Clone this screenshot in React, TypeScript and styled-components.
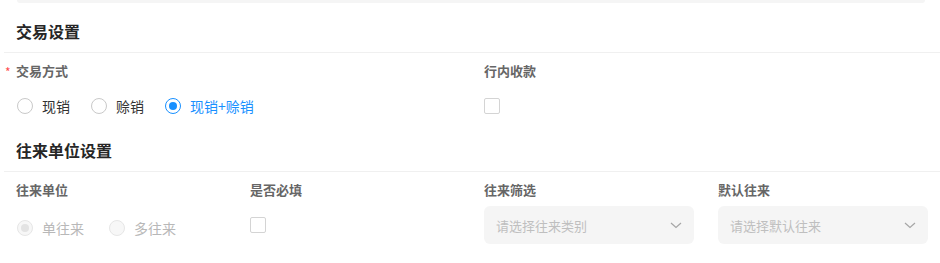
import React from 'react';
import styled, { createGlobalStyle } from 'styled-components';

const GlobalStyle = createGlobalStyle`
  body {
    margin: 0;
    background: #ffffff;
    font-family: "Noto Sans CJK SC", "Noto Sans", sans-serif;
    color: #333333;
  }
`;

function App() {
  return (
    <>
      <GlobalStyle />
      <Page>
        <TopStrip />
        <SectionHeader>
          <Title>交易设置</Title>
        </SectionHeader>
        <TwoCols>
          <Field>
            <Label required>交易方式</Label>
            <Control>
              <RadioGroup>
                <RadioItem gap={21}>
                  <Radio />
                  <RadioText>现销</RadioText>
                </RadioItem>
                <RadioItem gap={21}>
                  <Radio />
                  <RadioText>赊销</RadioText>
                </RadioItem>
                <RadioItem>
                  <Radio checked />
                  <RadioText checked>现销+赊销</RadioText>
                </RadioItem>
              </RadioGroup>
            </Control>
          </Field>
          <Field>
            <Label>行内收款</Label>
            <Control>
              <Checkbox />
            </Control>
          </Field>
        </TwoCols>

        <SectionHeader>
          <Title>往来单位设置</Title>
        </SectionHeader>
        <FourCols>
          <Field>
            <Label>往来单位</Label>
            <Control tall>
              <RadioGroup offset={3}>
                <RadioItem gap={25}>
                  <Radio disabled checked />
                  <RadioText disabled>单往来</RadioText>
                </RadioItem>
                <RadioItem>
                  <Radio disabled />
                  <RadioText disabled>多往来</RadioText>
                </RadioItem>
              </RadioGroup>
            </Control>
          </Field>
          <Field>
            <Label>是否必填</Label>
            <Control tall>
              <Checkbox />
            </Control>
          </Field>
          <Field>
            <Label>往来筛选</Label>
            <Control tall>
              <Select>
                <Placeholder>请选择往来类别</Placeholder>
                <Chevron />
              </Select>
            </Control>
          </Field>
          <Field>
            <Label>默认往来</Label>
            <Control tall>
              <Select>
                <Placeholder>请选择默认往来</Placeholder>
                <Chevron />
              </Select>
            </Control>
          </Field>
        </FourCols>
      </Page>
    </>
  );
}
export default App;

function Chevron() {
  return (
    <svg width="12" height="7" viewBox="0 0 12 7" fill="none">
      <path d="M1 1l5 4.5L11 1" stroke="#a6a6a6" strokeWidth="1.2" />
    </svg>
  );
}

const Page = styled.div`
  width: 940px;
  height: 263px;
  overflow: hidden;
`;

const TopStrip = styled.div`
  height: 3px;
  margin: 0 15px 0 17px;
  background: #f5f5f5;
  border-radius: 0 0 6px 6px;
`;

const SectionHeader = styled.div`
  margin-left: 4px;
  padding: 16px 12px 9px;
  border-bottom: 1px solid #f0f0f0;
`;

const Title = styled.h3`
  margin: 0;
  font-size: 16px;
  line-height: 24px;
  font-weight: 700;
  color: #262626;
`;

const TwoCols = styled.div`
  display: grid;
  grid-template-columns: 444px 444px;
  column-gap: 24px;
  padding: 0 16px;
`;

const FourCols = styled.div`
  display: grid;
  grid-template-columns: repeat(4, 210px);
  column-gap: 24px;
  padding: 0 16px;
`;

const Field = styled.div`
  display: flex;
  flex-direction: column;
  padding-top: 8px;
`;

const Label = styled.div<{ required?: boolean }>`
  position: relative;
  font-size: 13px;
  line-height: 20px;
  font-weight: 700;
  color: #666666;

  &::before {
    content: ${(p) => (p.required ? "'*'" : 'none')};
    position: absolute;
    left: -11px;
    top: 1px;
    color: #ff4d4f;
    font-size: 12px;
    font-weight: 400;
  }
`;

const Control = styled.div<{ tall?: boolean }>`
  display: flex;
  align-items: center;
  height: ${(p) => (p.tall ? '38px' : '32px')};
  margin-top: ${(p) => (p.tall ? '6px' : '9px')};
`;

const RadioGroup = styled.div<{ offset?: number }>`
  display: flex;
  align-items: center;
  padding-left: 1px;
  margin-top: ${(p) => (p.offset ? p.offset * 2 : 0)}px;
`;

const RadioItem = styled.label<{ gap?: number }>`
  display: flex;
  align-items: center;
  margin-right: ${(p) => p.gap ?? 0}px;
`;

const Radio = styled.span<{ checked?: boolean; disabled?: boolean }>`
  position: relative;
  box-sizing: border-box;
  width: 16px;
  height: 16px;
  border-radius: 50%;
  border: 1px solid
    ${(p) => (p.disabled ? '#e6e6e6' : p.checked ? '#1890ff' : '#c9c9c9')};
  background: ${(p) => (p.disabled ? '#f7f7f7' : '#ffffff')};

  &::after {
    content: '';
    display: ${(p) => (p.checked ? 'block' : 'none')};
    position: absolute;
    left: 50%;
    top: 50%;
    width: 8px;
    height: 8px;
    margin: -4px 0 0 -4px;
    border-radius: 50%;
    background: ${(p) => (p.disabled ? '#e3e3e3' : '#1890ff')};
  }
`;

const RadioText = styled.span<{ checked?: boolean; disabled?: boolean }>`
  margin-left: 9px;
  font-size: 14px;
  line-height: 22px;
  color: ${(p) => (p.disabled ? '#b8b8b8' : p.checked ? '#1890ff' : '#333333')};
`;

const Checkbox = styled.span`
  box-sizing: border-box;
  width: 16px;
  height: 16px;
  border: 1px solid #d4d4d4;
  border-radius: 2px;
  background: #ffffff;
`;

const Select = styled.div`
  display: flex;
  align-items: center;
  justify-content: space-between;
  box-sizing: border-box;
  width: 100%;
  height: 38px;
  padding: 0 12px;
  background: #f5f5f5;
  border-radius: 6px;
`;

const Placeholder = styled.span`
  font-size: 13px;
  color: #bfbfbf;
`;
